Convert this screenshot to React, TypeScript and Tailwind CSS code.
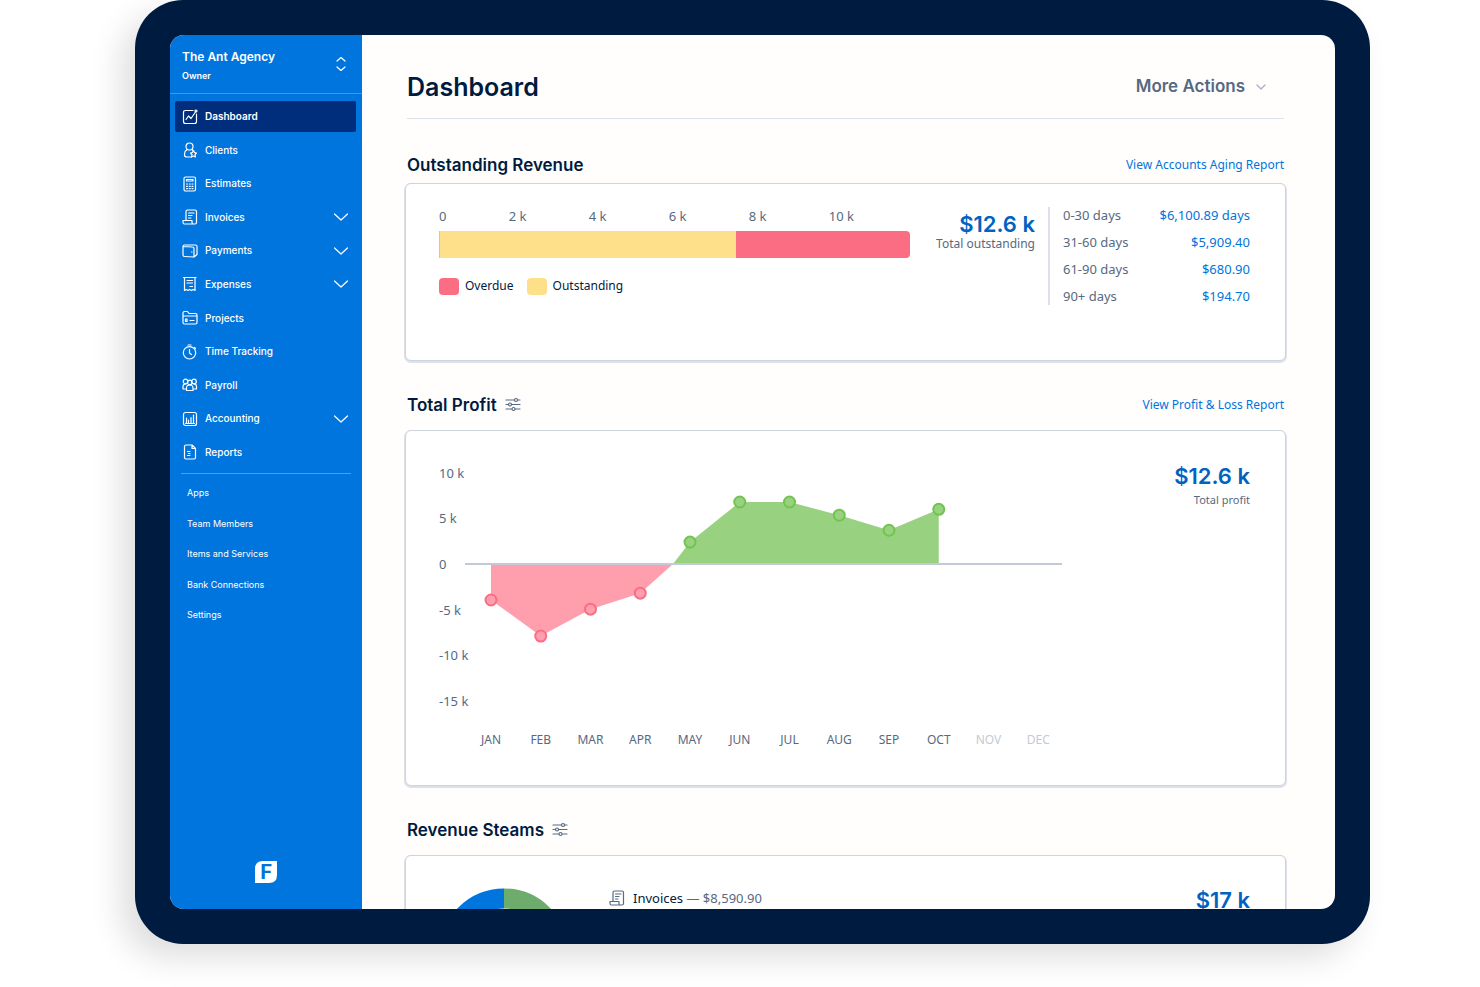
import type { ReactNode } from "react";
import { ChevronDown } from "lucide-react";
import { clsx } from "clsx";

interface NavItem {
  label: string;
  icon: ReactNode;
  active?: boolean;
  expandable?: boolean;
}

const InvoiceGlyph = () => (
  <>
    <path d="M4 11V2.5Q4 1 5.500 1H13Q14.500 1 14.500 2.500V13.500Q14.500 15 13 15H2.500Q1 15 1 13V11.500H10V13.500Q10 15 11.500 15" />
    <path d="M6.500 4H12M6.500 6.500H10M6.500 9H9" />
  </>
);

const navItems: NavItem[] = [
  {
    label: "Dashboard",
    active: true,
    icon: (
      <>
        <path d="M11 1.500H3.500Q1.500 1.500 1.500 3.500V12.500Q1.500 14.500 3.500 14.500H12.500Q14.500 14.500 14.500 12.500V5" />
        <path d="M4 10.500L6.500 7L9 9.500L13.500 3" />
        <circle cx="14" cy="2" r="1" />
      </>
    ),
  },
  {
    label: "Clients",
    icon: (
      <>
        <circle cx="7.500" cy="4.500" r="3.500" />
        <path d="M5 7.500Q2.500 9 2.500 12V13Q2.500 15 5 15H9.500M10 7.500L11 8.500" />
        <path d="M11.500 8.500L12.500 10.500L14.500 11L13 12.500L13.500 15L11.500 14L9.500 15L10 12.500L8.500 11L10.500 10.500Z" />
      </>
    ),
  },
  {
    label: "Estimates",
    icon: (
      <>
        <rect x="2" y="1" width="11.500" height="14" rx="1.500" />
        <path d="M4.500 3.500H11V5H4.500ZM4.500 8H5.500M7.300 8H8.300M10 8H11M4.500 10.300H5.500M7.300 10.300H8.300M10 10.300H11M4.500 12.600H5.500M7.300 12.600H8.300M10 12.600H11" />
      </>
    ),
  },
  { label: "Invoices", icon: <InvoiceGlyph />, expandable: true },
  {
    label: "Payments",
    expandable: true,
    icon: (
      <>
        <path d="M1 3.500Q1 2 2.500 2H13.500Q15 2 15 3.500V11.500L12 14V5.500Q12 4 10.500 4L1 3.500V12Q1 13.500 2.500 13.500L12 14" />
        <path d="M9.500 9H10" />
      </>
    ),
  },
  {
    label: "Expenses",
    expandable: true,
    icon: (
      <>
        <path d="M2.500 1.500H13V14.500L11.200 13.500L9.500 14.500L7.700 13.500L6 14.500L4.200 13.500L2.500 14.500Z" />
        <path d="M5 4.500H10.500M5 7H10.500M8 10.500H10.500M1.500 1.500H14" />
      </>
    ),
  },
  {
    label: "Projects",
    icon: (
      <>
        <path d="M1 12.500V3Q1 1.500 2.500 1.500H5.500L7 3.500H13.500Q15 3.500 15 5V12.500Q15 14 13.500 14H2.500Q1 14 1 12.500ZM1 6H15" />
        <path d="M3.500 9V11.500H5V9ZM8 10.500H12" />
      </>
    ),
  },
  {
    label: "Time Tracking",
    icon: (
      <>
        <circle cx="7.500" cy="8.800" r="6.200" />
        <path d="M7.500 5.500V9L9.500 10.500M6 1H9M12.500 3.500L13.500 4.500" />
      </>
    ),
  },
  {
    label: "Payroll",
    icon: (
      <>
        <circle cx="3.500" cy="4.500" r="2.300" />
        <circle cx="12" cy="4.500" r="2.300" />
        <circle cx="7.750" cy="5.500" r="2.300" />
        <path d="M4.500 13.500V11Q4.500 8 7.750 8Q11 8 11 11V13.500ZM4.500 12H1V9.500Q1 7 3.500 6.800M11 12H14.500V9.500Q14.500 7 12 6.800" />
      </>
    ),
  },
  {
    label: "Accounting",
    expandable: true,
    icon: (
      <>
        <rect x="1.500" y="1.500" width="13" height="13" rx="2" />
        <path d="M3.500 12.500H12.500M4.500 12V7M6.500 12V9M9 12V6.500M11.500 12V4" />
      </>
    ),
  },
  {
    label: "Reports",
    icon: (
      <>
        <path d="M10 1H4Q2.500 1 2.500 2.500V13.500Q2.500 15 4 15H12Q13.500 15 13.500 13.500V4.500L10 1V4.500H13.500" />
        <path d="M5.500 7.500H8M6.500 9.500H8M5.500 11.500H8" />
      </>
    ),
  },
];

const secondaryItems = [
  "Apps",
  "Team Members",
  "Items and Services",
  "Bank Connections",
  "Settings",
];

const aging = [
  { range: "0-30 days", amount: "$6,100.89 days" },
  { range: "31-60 days", amount: "$5,909.40" },
  { range: "61-90 days", amount: "$680.90" },
  { range: "90+ days", amount: "$194.70" },
];

// Monthly profit in thousands, null for months still to come
const profit: { month: string; value: number | null }[] = [
  { month: "JAN", value: -3.95 },
  { month: "FEB", value: -7.9 },
  { month: "MAR", value: -4.95 },
  { month: "APR", value: -3.2 },
  { month: "MAY", value: 2.4 },
  { month: "JUN", value: 6.8 },
  { month: "JUL", value: 6.8 },
  { month: "AUG", value: 5.35 },
  { month: "SEP", value: 3.7 },
  { month: "OCT", value: 6 },
  { month: "NOV", value: null },
  { month: "DEC", value: null },
];

const Glyph = ({ children, className }: { children: ReactNode; className?: string }) => (
  <svg
    viewBox="0 0 16 16"
    fill="none"
    stroke="currentColor"
    strokeWidth="1.2"
    strokeLinecap="round"
    strokeLinejoin="round"
    className={clsx("size-4 shrink-0", className)}
    aria-hidden="true"
  >
    {children}
  </svg>
);

const SlidersButton = ({ label }: { label: string }) => (
  <button type="button" aria-label={label} className="text-[#576981]">
    <Glyph>
      <path d="M1 3H9M13 3H15M1 7.500H3M7 7.500H15M1 12H6.500M10.500 12H15" />
      <circle cx="11" cy="3" r="1.500" />
      <circle cx="5" cy="7.500" r="1.500" />
      <circle cx="8.500" cy="12" r="1.500" />
    </Glyph>
  </button>
);

const Sidebar = () => (
  <aside className="flex w-48 shrink-0 flex-col bg-[#0075dd] text-white">
    <button
      type="button"
      className="flex h-[59px] items-center justify-between border-b border-white/25 pl-3 pr-[13px] text-left"
    >
      <span className="pt-1">
        <span className="block text-[12px] leading-5 font-semibold">The Ant Agency</span>
        <span className="block text-[9px] leading-[18px] font-semibold">Owner</span>
      </span>
      <Glyph>
        <path d="M4 5L8 1.500L12 5M4 11L8 14.500L12 11" />
      </Glyph>
    </button>

    <nav className="mt-1.5 flex flex-col">
      <ul className="grid h-[369px] auto-rows-fr pr-1.5 pl-[5px]">
        {navItems.map(({ label, icon, active, expandable }) => (
          <li key={label} className="flex items-center">
            <a
              href="#"
              aria-current={active ? "page" : undefined}
              className={clsx(
                "flex h-[31px] w-full items-center gap-[7px] rounded-[2px] px-[7px] text-[10px]",
                active ? "bg-[#002e7c] font-semibold" : "font-medium"
              )}
            >
              <Glyph>{icon}</Glyph>
              <span className="flex-1">{label}</span>
              {expandable && (
                <Glyph>
                  <path d="M1.500 5L8 11L14.500 5" />
                </Glyph>
              )}
            </a>
          </li>
        ))}
      </ul>
      <ul className="mx-[11px] mt-1 grid h-[157px] auto-rows-fr border-t border-white/30 pt-1 pl-1.5">
        {secondaryItems.map((item) => (
          <li key={item} className="flex items-center">
            <a href="#" className="text-[9px]">
              {item}
            </a>
          </li>
        ))}
      </ul>
    </nav>

    <svg viewBox="0 0 22 22" className="mx-auto mt-auto mb-[26px] size-[22px]" role="img" aria-label="F">
      <path d="M8 0H22V14Q22 22 14 22H0V8Q0 0 8 0Z" fill="#fff" />
      <text
        x="11"
        y="18"
        textAnchor="middle"
        fill="#0075dd"
        className="font-['Liberation_Sans_Narrow','Roboto',sans-serif] text-[21px] font-bold"
      >
        F
      </text>
    </svg>
  </aside>
);

interface SectionProps {
  title: string;
  link?: string;
  filterable?: boolean;
  cardClass: string;
  children: ReactNode;
}

const Section = ({ title, link, filterable, cardClass, children }: SectionProps) => (
  <section className="mb-[30px]">
    <div className="flex h-7 items-center justify-between px-0.5">
      <div className="flex items-center gap-2">
        <h2 className="text-[17px] leading-7 font-semibold">{title}</h2>
        {filterable && <SlidersButton label={`Filter ${title}`} />}
      </div>
      {link && (
        <a href="#" className="font-['Noto_Sans',sans-serif] text-[12px] text-[#0075dd]">
          {link}
        </a>
      )}
    </div>
    <div
      className={clsx(
        "rounded-md border border-[#cdd4de] bg-white pr-[35px] pl-[33px] font-['Noto_Sans',sans-serif] shadow-[0_1px_0_1px_#dde2ea]",
        cardClass
      )}
    >
      {children}
    </div>
  </section>
);

const BigValue = ({ children }: { children: ReactNode }) => (
  <p className="font-['Inter',sans-serif] text-[22px] leading-6 font-semibold text-[#0063c1]">
    {children}
  </p>
);

const OutstandingRevenue = () => (
  <div className="flex items-start">
    <div className="flex-1">
      <div className="flex justify-between pr-14 text-[13px] leading-6 text-[#576981]">
        {["0", "2 k", "4 k", "6 k", "8 k", "10 k"].map((tick) => (
          <span key={tick}>{tick}</span>
        ))}
      </div>
      <div className="mt-[3px] flex h-[27px] overflow-hidden rounded-r border-l border-[#a9d8c5]">
        <div className="w-[63%] bg-[#ffe08a]" />
        <div className="flex-1 bg-[#fb6d83]" />
      </div>
      <div className="mt-[18px] flex items-center gap-[13px] text-[12px] leading-5 text-[#001b40]">
        <span className="flex items-center gap-1.5">
          <i className="h-[17px] w-5 rounded bg-[#fb6d83]" />
          Overdue
        </span>
        <span className="flex items-center gap-1.5">
          <i className="h-[17px] w-5 rounded bg-[#ffe08a]" />
          Outstanding
        </span>
      </div>
    </div>
    <div className="w-[125px] pt-2 text-right">
      <BigValue>$12.6 k</BigValue>
      <p className="text-[12px] leading-4 text-[#576981]">Total outstanding</p>
    </div>
    <div className="mt-[3px] ml-[13px] w-[202px] border-l-2 border-[#dde2ea] pl-[13px]">
      <table className="-my-[5px] w-full text-[13px] leading-[27px]">
        <tbody>
          {aging.map(({ range, amount }) => (
            <tr key={range}>
              <th scope="row" className="text-left font-normal text-[#576981]">
                {range}
              </th>
              <td className="text-right text-[#0075dd]">{amount}</td>
            </tr>
          ))}
        </tbody>
      </table>
    </div>
  </div>
);

const ZERO_Y = 104;
const monthX = (index: number) => 52 + index * 49.75;
const valueY = (value: number) => ZERO_Y - value * 9.12;

const ProfitChart = () => {
  const points = profit.flatMap(({ value }, index) =>
    value === null ? [] : [{ x: monthX(index), y: valueY(value), value }]
  );
  const losses = points.filter((p) => p.value < 0);
  const gains = points.filter((p) => p.value >= 0);
  const crossing = `234,${ZERO_Y}`;
  const toPath = (list: typeof points) => list.map((p) => `${p.x},${p.y}`).join(" ");

  return (
    <svg viewBox="0 0 624 292" className="w-full" role="img" aria-label="Total profit by month">
      <polygon
        points={`${losses[0].x},${ZERO_Y} ${toPath(losses)} ${crossing}`}
        fill="#ff9fae"
      />
      <polygon
        points={`${crossing} ${toPath(gains)} ${gains[gains.length - 1].x},${ZERO_Y}`}
        fill="#98d281"
      />
      <path d={`M26 ${ZERO_Y}H623`} stroke="#c3cad5" strokeWidth="2" />
      {points.map(({ x, y, value }) => (
        <circle
          key={x}
          cx={x}
          cy={y}
          r="5.500"
          strokeWidth="2"
          fill={value < 0 ? "#ff9fae" : "#98d281"}
          stroke={value < 0 ? "#fb6d83" : "#72c351"}
        />
      ))}
      {[10, 5, 0, -5, -10, -15].map((tick) => (
        <text key={tick} x="0" y={valueY(tick) + 5} fill="#576981" className="text-[13px]">
          {tick === 0 ? "0" : `${tick} k`}
        </text>
      ))}
      {profit.map(({ month, value }, index) => (
        <text
          key={month}
          x={monthX(index)}
          y="284"
          textAnchor="middle"
          fill={value === null ? "#c3cad5" : "#576981"}
          className="text-[12px]"
        >
          {month}
        </text>
      ))}
    </svg>
  );
};

export default function App() {
  return (
    <div className="h-screen overflow-hidden bg-white pr-[110px] pb-[43px] pl-[135px] font-['Inter',sans-serif] text-[#001b40]">
      <div className="h-full rounded-[48px] bg-[#001b40] p-[35px] shadow-[-14px_14px_32px_rgba(0,0,0,0.13)]">
        <div className="flex h-full overflow-hidden rounded-[14px] bg-[#fffefc]">
          <Sidebar />
          <main className="min-w-0 flex-1 overflow-hidden pt-8 pr-[49px] pl-[43px]">
            <header className="mx-0.5 mb-8 flex items-center justify-between border-b border-[#dde2ea] pb-[11px]">
              <h1 className="text-[25px] leading-10 font-semibold">Dashboard</h1>
              <button
                type="button"
                className="flex items-center gap-2 pr-[15px] text-[17px] font-semibold text-[#576981]"
              >
                More Actions
                <ChevronDown className="size-4 text-[#a9b3c1]" />
              </button>
            </header>

            <Section
              title="Outstanding Revenue"
              link="View Accounts Aging Report"
              cardClass="mt-1 pt-5 pb-[55px]"
            >
              <OutstandingRevenue />
            </Section>

            <Section
              title="Total Profit"
              link="View Profit & Loss Report"
              filterable
              cardClass="mt-[11px] pt-[29px] pb-[33px]"
            >
              <div className="grid grid-cols-[624fr_187fr]">
                <ProfitChart />
                <div className="pt-1 text-right">
                  <BigValue>$12.6 k</BigValue>
                  <p className="mt-1 text-[11px] leading-4 text-[#576981]">Total profit</p>
                </div>
              </div>
            </Section>

            <Section title="Revenue Steams" filterable cardClass="mt-[11px] py-8">
              <div className="flex items-start">
                <svg viewBox="0 0 130 130" className="size-[130px] shrink-0" role="img" aria-label="Revenue streams">
                  <path d="M65 10.500A54.500 54.500 0 0 1 65 119.500" fill="none" stroke="#6dac6c" strokeWidth="20" />
                  <path d="M65 119.500A54.500 54.500 0 0 1 65 10.500" fill="none" stroke="#0075dd" strokeWidth="20" />
                </svg>
                <p className="ml-10 flex items-center gap-2 text-[13px] leading-5">
                  <Glyph className="text-[#576981]">
                    <InvoiceGlyph />
                  </Glyph>
                  <span>
                    Invoices <span className="text-[#576981]">— $8,590.90</span>
                  </span>
                </p>
                <div className="ml-auto">
                  <BigValue>$17 k</BigValue>
                </div>
              </div>
            </Section>
          </main>
        </div>
      </div>
    </div>
  );
}
